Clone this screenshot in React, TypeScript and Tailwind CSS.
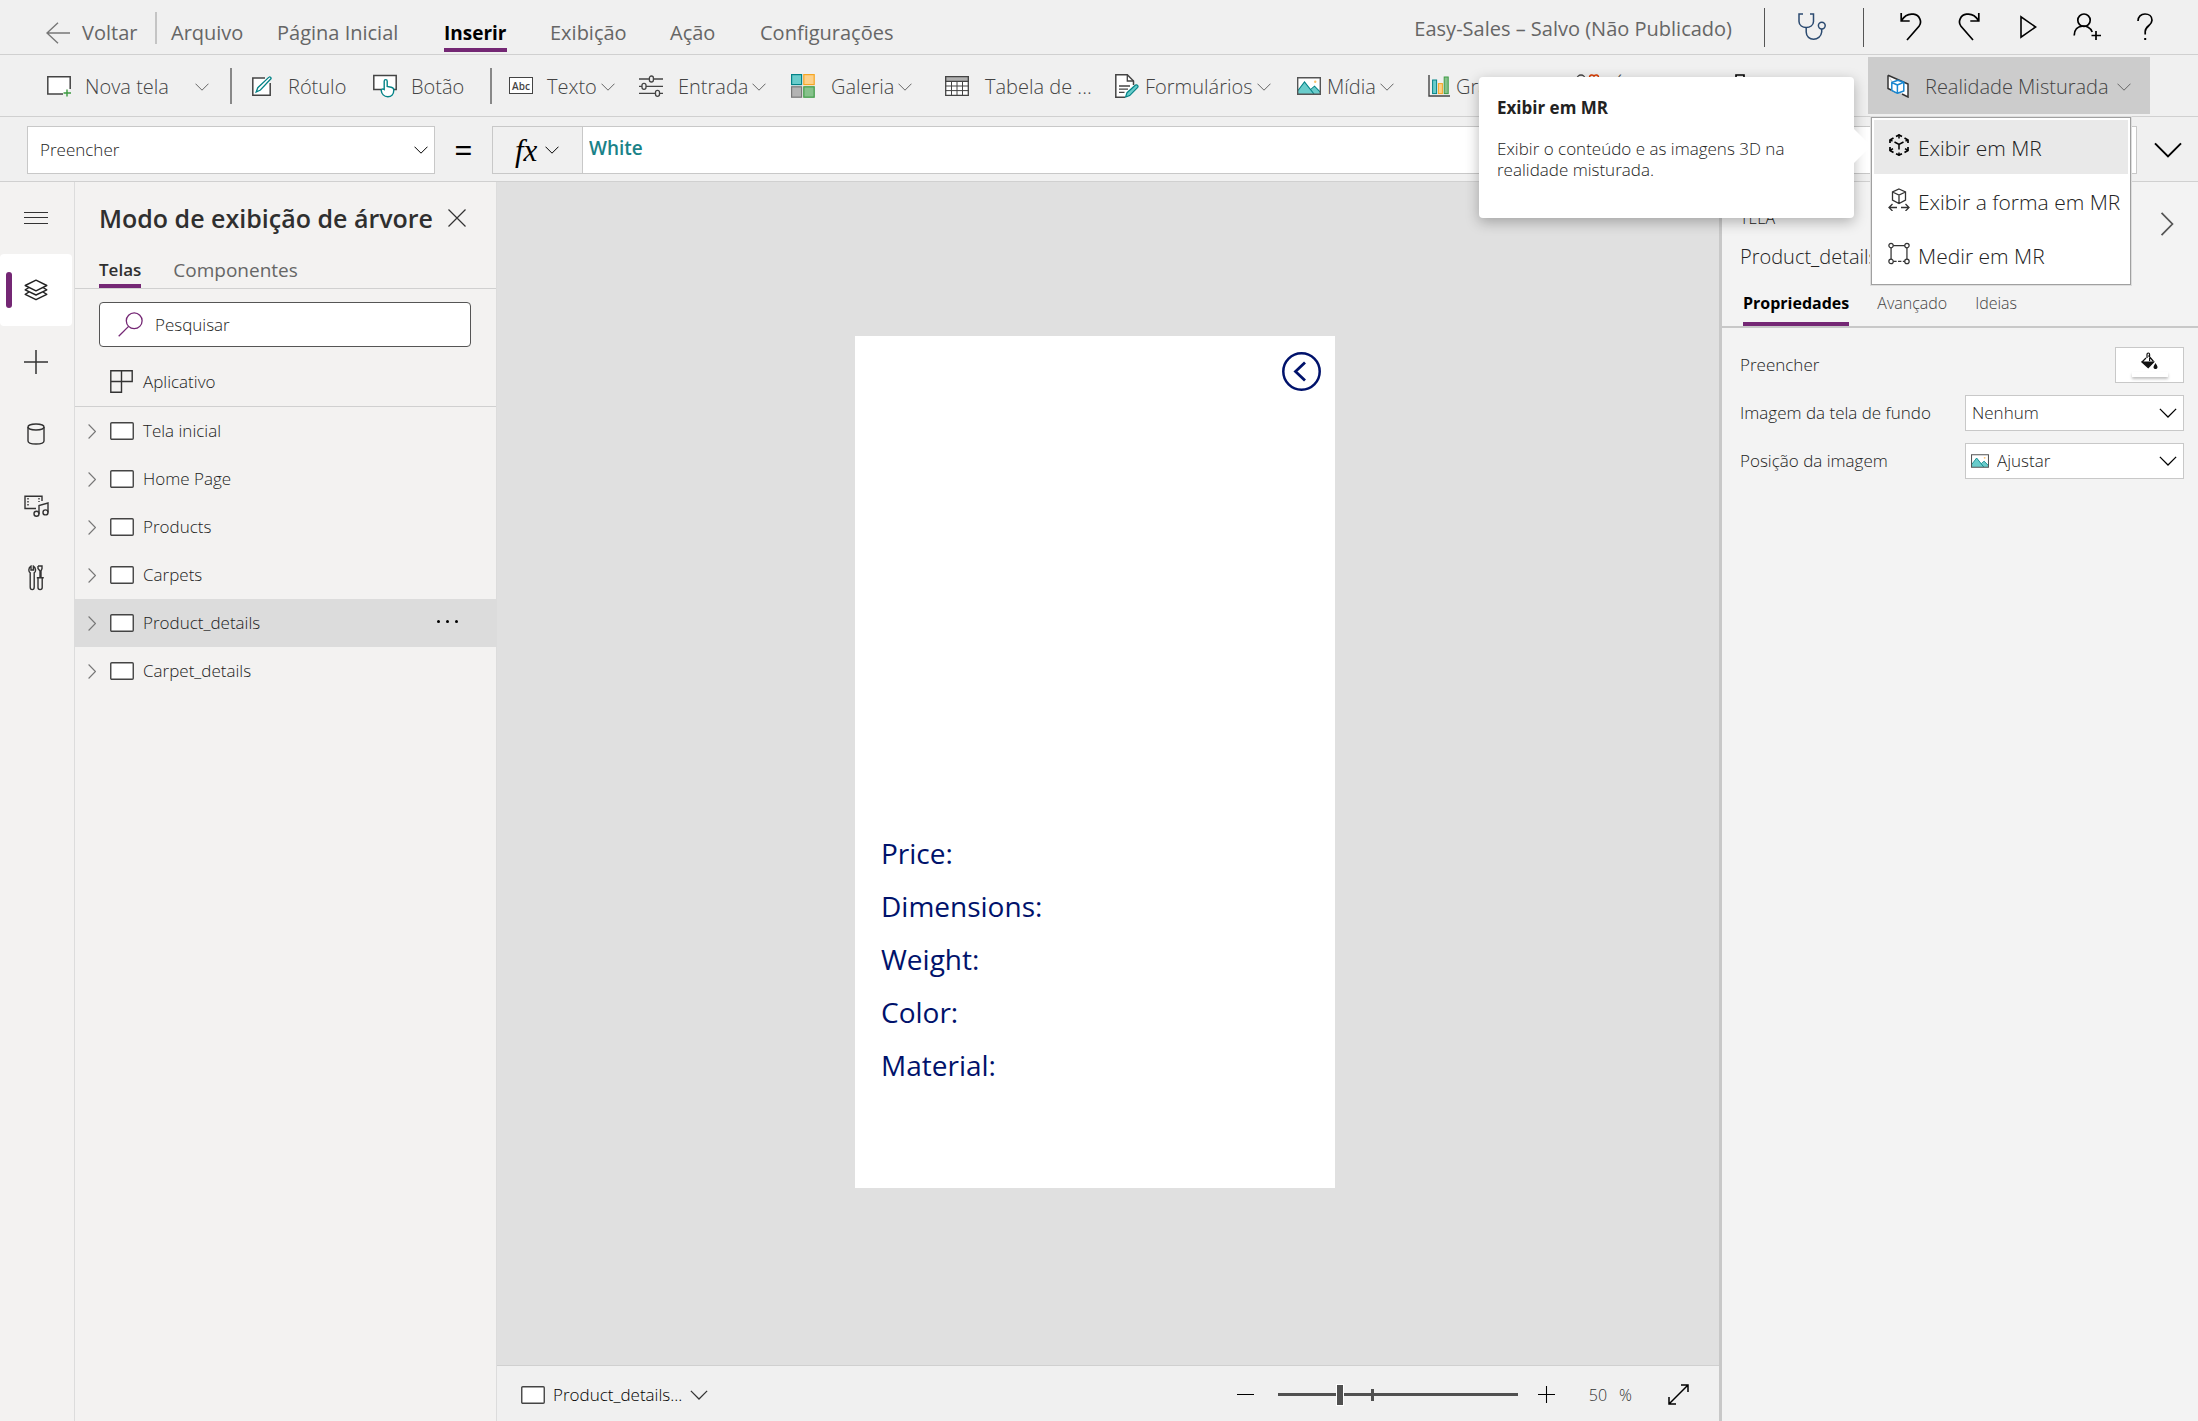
import type { ReactNode } from 'react';

type IconProps = { className?: string };

const ChevronDown = ({ className = 'w-[14px] h-2 text-[#666]' }: IconProps) => (
  <svg viewBox="0 0 14 8" className={`shrink-0 ${className}`} fill="none" stroke="currentColor" strokeWidth="1">
    <path d="M.5 .7 7 7.2 13.5 .7" />
  </svg>
);

const ChevronRight = ({ className = 'w-2 h-[15px] text-[#777]' }: IconProps) => (
  <svg viewBox="0 0 8 15" className={`shrink-0 ${className}`} fill="none" stroke="currentColor" strokeWidth="1.1">
    <path d="M.6 .5 7.4 7.5 .6 14.5" />
  </svg>
);

const BackArrow = () => (
  <svg viewBox="0 0 24 22" className="w-6 h-[22px] text-[#777]" fill="none" stroke="currentColor" strokeWidth="1.4">
    <path d="M24 11H1M12 .8 1 11l11 10.2" />
  </svg>
);

const ScreenIcon = () => (
  <svg viewBox="0 0 24 18" className="w-6 h-[18px] shrink-0">
    <rect x=".75" y=".75" width="22.5" height="16.5" rx="1" fill="#fff" stroke="#444" strokeWidth="1.4" />
  </svg>
);

const NewScreenIcon = () => (
  <svg viewBox="0 0 24 22" className="w-6 h-[22px]" fill="none">
    <path d="M16 19H.8V1.8h22.4V14" fill="#fff" stroke="#444" strokeWidth="1.5" />
    <path d="M20 14.5v7M16.5 18H24" stroke="#3c9a41" strokeWidth="1.4" />
  </svg>
);

const LabelIcon = () => (
  <svg viewBox="0 0 20 20" className="w-5 h-5" fill="none">
    <path d="M13 2H.8v17.2h17.4V7" fill="#fff" stroke="#444" strokeWidth="1.5" />
    <path d="M17 1.1c.8-.8 2.6.6 1.9 1.7L8.4 14l-4.2 2 1.6-4.3Z" fill="#fff" stroke="#038387" strokeWidth="1.3" />
  </svg>
);

const ButtonIcon = () => (
  <svg viewBox="0 0 24 24" className="w-6 h-6" fill="none">
    <path d="M9 15.500H.8V1.500h22.400v14H20" fill="#fff" stroke="#444" strokeWidth="1.5" />
    <path
      d="M11.2 15.500V7.200c0-2.100 3-2.100 3 0v5.200l4 .9c1.600.4 2.600 1.300 2.600 2.800 0 4-2.400 6.700-6 6.700-3.800 0-6.200-3-6.600-6.400 0-1.400 1.800-1.700 3-.9Z"
      fill="#fff"
      stroke="#038387"
      strokeWidth="1.4"
    />
  </svg>
);

const TextIcon = () => (
  <span className="flex h-[17px] w-6 items-center justify-center border border-[#444] bg-white text-[10px] leading-none font-semibold text-[#444]">
    Abc
  </span>
);

const InputIcon = () => (
  <svg viewBox="0 0 26 22" className="w-[26px] h-[22px]" fill="none" stroke="#444" strokeWidth="1.3">
    <path d="M1 4h10M16 4h9M1 11.3h3M8 11.3h17M1 18.3h16M22 18.3h3" />
    <rect x="11.4" y="1" width="4" height="6" rx="2" />
    <rect x="4" y="8.3" width="4" height="6" rx="2" />
    <rect x="17.5" y="15.3" width="4" height="6" rx="2" />
  </svg>
);

const GalleryIcon = () => (
  <svg viewBox="0 0 24 24" className="w-6 h-6" strokeWidth="1.2">
    <rect x=".6" y=".6" width="10" height="10" fill="#69cccb" stroke="#038387" />
    <rect x="12.8" y=".6" width="10.4" height="10" fill="#fdd18a" stroke="#f5a623" />
    <rect x=".6" y="12.8" width="10" height="10.4" fill="#b3b3b3" stroke="#777" />
    <rect x="12.8" y="12.8" width="10.4" height="10.4" fill="#86c28b" stroke="#3f9c46" />
  </svg>
);

const TableIcon = () => (
  <svg viewBox="0 0 24 20" className="w-6 h-5" fill="none" stroke="#444" strokeWidth="1.3">
    <path d="M.7.7h22.6v18.6H.7Z" fill="#fff" />
    <path d="M.7.7h22.6v4.6H.7Z" fill="#b0b0b0" />
    <path d="M.7 10h22.6M.7 14.6h22.6M6.5 5.3v14M12 5.3v14M17.5 5.3v14" strokeWidth="1" />
  </svg>
);

const FormIcon = () => (
  <svg viewBox="0 0 24 24" className="w-6 h-6" fill="none">
    <path d="M10 23.2H.8V.8h11.5l6.2 6.2v4" fill="#fff" stroke="#444" strokeWidth="1.5" />
    <path d="M12.3.8V7h6.2M4 12h11M4 15.2h9M4 18.4h5.5" stroke="#444" strokeWidth="1.3" />
    <path d="m10.6 23 1.4-4.3 8.5-7.6c1.6-.9 3.2.8 2.2 2.2l-8 8.3Z" fill="#69cccb" stroke="#038387" strokeWidth="1.2" />
  </svg>
);

const MediaIcon = ({ className = 'w-6 h-[18px]' }: IconProps) => (
  <svg viewBox="0 0 24 18" className={`shrink-0 ${className}`} fill="none">
    <path d="M.7.7h22.6v16.6H.7Z" fill="#fff" />
    <path d="M1 13.5 7.5 5l6.8 8 3.2-3.6L23 15v2.3H1Z" fill="#69cccb" />
    <path d="M1 13.5 7.5 5 17 17M13.6 12.6l3.9-3.4 5.8 6" stroke="#038387" strokeWidth="1.1" />
    <circle cx="18.2" cy="4.8" r="1.2" fill="#fdc068" />
    <path d="M.7.7h22.6v16.6H.7Z" stroke="#555" strokeWidth="1.4" />
  </svg>
);

const ChartIcon = () => (
  <svg viewBox="0 0 22 22" className="w-[22px] h-[22px]" fill="none">
    <rect x="4.6" y="5" width="4" height="13.6" fill="#69cccb" stroke="#038387" />
    <rect x="10.4" y="8.6" width="4" height="10" fill="#fdd18a" stroke="#f5a623" />
    <rect x="16.2" y="2" width="4" height="16.6" fill="#86c28b" stroke="#3f9c46" />
    <path d="M1 0v21h21" stroke="#444" strokeWidth="1.4" />
  </svg>
);

const ShapesIcon = () => (
  <svg viewBox="0 0 24 24" className="w-6 h-6" fill="none" strokeWidth="1.4">
    <circle cx="5" cy="5" r="4" stroke="#444" />
    <path d="M13.5 3.4c0-3 4-3 4.5-.8.5-2.2 4.5-2.2 4.5.8 0 2.6-4.5 5-4.5 5s-4.5-2.4-4.5-5Z" stroke="#d83b01" />
    <path d="M1 13h8v8H1ZM18 13l4 8h-8Z" stroke="#444" />
  </svg>
);

const CustomIcon = () => (
  <svg viewBox="0 0 10 24" className="w-[10px] h-6" fill="none" stroke="#000" strokeWidth="1.6">
    <path d="M1 23V1h8v22Z" />
  </svg>
);

const MixedRealityIcon = () => (
  <svg viewBox="0 0 22 24" className="w-[22px] h-6" fill="none">
    <path d="M1 1.2 21 10v13L15 20M9.5 18.5 1 14.5V1.2" fill="#fff" stroke="#333" strokeWidth="1.5" />
    <path d="m10 7.5 6.5 1.5v8.5L10 19.5 4 16.5V8.500Z" fill="#fff" />
    <path d="M10.4 11v8.3l-5.600-3V8.500l6-2.200 6 2V17l-6.400 2.300M4.800 8.500l5.600 2.500 6.400-2.700" stroke="#1b87d0" strokeWidth="1.5" strokeLinejoin="round" />
  </svg>
);

const HealthIcon = () => (
  <svg viewBox="0 0 28 28" className="w-7 h-7" fill="none" stroke="#2b4a70" strokeWidth="1.5">
    <path d="M5 1H1v7.500c0 8 14.500 8 14.500 0V1H12" />
    <path d="M8.200 14.500v4.500c0 9.500 14.500 9.500 15.500 0v-3" />
    <circle cx="23.800" cy="12.600" r="3.400" />
  </svg>
);

const UndoIcon = () => (
  <svg viewBox="0 0 22 28" className="w-[22px] h-7" fill="none" stroke="#000" strokeWidth="1.7">
    <path d="M1.200 0v8h8.500M1.500 7.500C4.500 2.500 9 .5 13.500 1.200c6 .8 9 7.500 5.500 12L7 27" />
  </svg>
);

const RedoIcon = () => (
  <svg viewBox="0 0 22 28" className="w-[22px] h-7" fill="none" stroke="#000" strokeWidth="1.7">
    <path d="M20.800 0v8h-8.500M20.500 7.500C17.500 2.500 13 .5 8.500 1.200 2.500 2-.5 8.700 3 13.200L15 27" />
  </svg>
);

const PlayIcon = () => (
  <svg viewBox="0 0 17 24" className="w-[17px] h-6" fill="none" stroke="#000" strokeWidth="1.6">
    <path d="M1 1.800v20.400L15.600 12Z" />
  </svg>
);

const ShareIcon = () => (
  <svg viewBox="0 0 28 28" className="w-7 h-7" fill="none" stroke="#000" strokeWidth="1.7">
    <circle cx="11" cy="7.200" r="6.200" />
    <path d="M1.200 22.500c0-12 15-12 18-3.500M23 18v9M18.500 22.500H28" />
  </svg>
);

const HelpIcon = () => (
  <svg viewBox="0 0 16 28" className="w-4 h-7" fill="none" stroke="#000" strokeWidth="1.7">
    <path d="M1 8C1 3.500 4 1 8 1s7 2.500 7 6.200c0 5.300-6.800 5.800-6.800 11.300v3" />
    <path d="M8.200 25v2" strokeWidth="2" />
  </svg>
);

const MenuIcon = () => (
  <svg viewBox="0 0 24 12" className="w-6 h-3" stroke="#333" strokeWidth="1.1">
    <path d="M0 .5h24M0 5.500h24M0 11.500h24" />
  </svg>
);

const LayersIcon = () => (
  <svg viewBox="0 0 24 22" className="w-6 h-[22px]" fill="none" stroke="#222" strokeWidth="1.4" strokeLinejoin="round">
    <path d="M12 1.200 22.800 6.500 12 11.800 1.200 6.500Z" />
    <path d="m5 8.500-3.800 2.300L12 16l10.800-5.200L19 8.500" />
    <path d="m5 13-3.800 2.300L12 20.700l10.800-5.400L19 13" />
  </svg>
);

const PlusIcon = ({ className = 'w-6 h-6 text-[#333]' }: IconProps) => (
  <svg viewBox="0 0 24 24" className={className} stroke="currentColor" strokeWidth="1.5">
    <path d="M12 0v24M0 12h24" />
  </svg>
);

const DataIcon = () => (
  <svg viewBox="0 0 18 22" className="w-[18px] h-[22px]" fill="none" stroke="#333" strokeWidth="1.4">
    <ellipse cx="9" cy="4" rx="8" ry="3" />
    <path d="M1 4v14c0 4 16 4 16 0V4" />
  </svg>
);

const MusicIcon = () => (
  <svg viewBox="0 0 25 22" className="w-[25px] h-[22px]" fill="none" stroke="#333" strokeWidth="1.4">
    <path d="M12 13.500H1V1.200h17V6" />
    <path d="M4 3v9M15 3v4" strokeDasharray="1.5 1.5" />
    <path d="M15 19V10.500L24 8v9.500" />
    <circle cx="12.500" cy="18.800" r="2.500" />
    <circle cx="21.500" cy="17.400" r="2.500" />
  </svg>
);

const ToolsIcon = () => (
  <svg viewBox="0 0 16 26" className="w-4 h-[26px]" fill="none" stroke="#333" strokeWidth="1.4">
    <path d="M3 1.200C0 3 .5 7 2.200 7.800V22c0 3.500 4 3.500 4 0V7.800C8 7 8.200 3 5.400 1.200V5H3Z" />
    <path d="M10 1h4v2.500L13 6v6.500M12 12.500V6l-2-2.500V1M8.800 12.800h7M10 13v9.500c0 2.800 4.200 2.800 4.200 0V13" />
  </svg>
);

const CloseIcon = () => (
  <svg viewBox="0 0 18 18" className="w-[18px] h-[18px]" stroke="#333" strokeWidth="1.2">
    <path d="m.5.5 17 17M17.500.5l-17 17" />
  </svg>
);

const SearchIcon = () => (
  <svg viewBox="0 0 25 25" className="w-[25px] h-[25px] shrink-0" fill="none" stroke="#742774" strokeWidth="1.3">
    <circle cx="16.200" cy="8.800" r="7.900" />
    <path d="M10.600 14.400.7 24.300" />
  </svg>
);

const AppIcon = () => (
  <svg viewBox="0 0 23 23" className="w-[23px] h-[23px]" fill="none" stroke="#333" strokeWidth="1.4">
    <path d="M.8.8h21.400v10.700H.8ZM.8 11.500h10.700v10.700H.8ZM11.500.8v10.700" />
  </svg>
);

const ViewInMrIcon = () => (
  <svg viewBox="0 0 20 22" className="w-5 h-[22px]" fill="none" stroke="#000" strokeWidth="1.7">
    <path d="M7 2.500 10 1l3 1.500M15.500 4 19 6v3M19 13v3.500l-3.500 2M13 19.700 10 21l-3-1.300M4.500 18.500 1 16.500V13M1 9V6l3.500-2" />
    <path d="m5.500 8 4.500 2.500L14.500 8M10 10.500v5M10 .5v4M1 16.500l3-1.800M19 16.500l-3-1.800M10 21.500v-3M1 5.800l2.500 1.400M19 5.800l-2.500 1.400" strokeWidth="1.5" />
  </svg>
);

const ViewShapeIcon = () => (
  <svg viewBox="0 0 22 23" className="w-[22px] h-[23px]" fill="none" stroke="#333" strokeWidth="1.3">
    <path d="m11 1 6.500 3v8L11 15.500 4.500 12V4ZM4.500 4 11 7l6.500-3M11 7v8.500" />
    <path d="M9 19.500H1M13 19.500h8M4.500 16 1 19.500 4.500 23M17.500 16l3.500 3.500-3.500 3.500" />
  </svg>
);

const MeasureIcon = () => (
  <svg viewBox="0 0 23 23" className="w-[22px] h-[23px]" fill="none" stroke="#333" strokeWidth="1.3">
    <path d="M5.500 3.200h12M3.200 5.500v12M19.800 5.500v12" />
    <path d="M5.500 19.800h12" strokeDasharray="3.5 1.5" />
    <circle cx="3.200" cy="3.200" r="2.300" />
    <circle cx="19.800" cy="3.200" r="2.300" />
    <circle cx="3.200" cy="19.800" r="2.300" />
    <circle cx="19.800" cy="19.800" r="2.300" />
  </svg>
);

const FillIcon = () => (
  <svg viewBox="0 0 17 18" className="w-[17px] h-[18px]" fill="none" stroke="#111" strokeWidth="1.2">
    <path d="M6 6V2.500c0-2 2.600-2 2.600 0V9M7.500 3.500l5 6" />
    <path d="M1 10h11.600l-5.400 5.600Z M5 6 1 10" fill="#111" />
    <path d="M14.500 11c1 1.800 2 2.800 2 4.200 0 2.400-4 2.400-4 0 0-1.400 1-2.400 2-4.200Z" fill="#111" stroke="none" />
  </svg>
);

const ExpandIcon = () => (
  <svg viewBox="0 0 21 21" className="w-[21px] h-[21px]" fill="none" stroke="#000" strokeWidth="1.5">
    <path d="M1.500 19.500 19.500 1.500M13 1h7v7M1 13v7h7" />
  </svg>
);

const CircleBackIcon = () => (
  <svg viewBox="0 0 39 39" className="w-[39px] h-[39px]" fill="none" stroke="#00126b" strokeWidth="2.5">
    <circle cx="19.500" cy="19.500" r="18.200" />
    <path d="m23 10.500-9.500 9 9.500 9" strokeWidth="2.8" />
  </svg>
);

const navItems = [
  { label: 'Arquivo', className: 'w-[106px]' },
  { label: 'Página Inicial', className: 'w-[167px]' },
  { label: 'Inserir', className: 'w-[106px]', active: true },
  { label: 'Exibição', className: 'w-[120px]' },
  { label: 'Ação', className: 'w-[90px]' },
  { label: 'Configurações', className: 'w-[140px]' },
];

type Tool = { label: string; icon: ReactNode; className: string; chevron?: boolean };

const basicTools: Tool[] = [
  { label: 'Rótulo', icon: <LabelIcon />, className: 'w-[121px] gap-4' },
  { label: 'Botão', icon: <ButtonIcon />, className: 'w-[117px] gap-3.5' },
];

const insertTools: Tool[] = [
  { label: 'Texto', icon: <TextIcon />, className: 'w-[129px] gap-3.5', chevron: true },
  { label: 'Entrada', icon: <InputIcon />, className: 'w-[153px] gap-3.5', chevron: true },
  { label: 'Galeria', icon: <GalleryIcon />, className: 'w-[154px] gap-4', chevron: true },
  { label: 'Tabela de ...', icon: <TableIcon />, className: 'w-[170px] gap-4' },
  { label: 'Formulários', icon: <FormIcon />, className: 'w-[182px] gap-1.5', chevron: true },
  { label: 'Mídia', icon: <MediaIcon />, className: 'w-[131px] gap-1.5', chevron: true },
  { label: 'Gráficos', icon: <ChartIcon />, className: 'w-[148px] gap-1.5', chevron: true },
  { label: 'Ícones', icon: <ShapesIcon />, className: 'w-[159px] gap-4', chevron: true },
  { label: 'Controle', icon: <CustomIcon />, className: 'w-[133px] gap-4' },
];

const screens = ['Tela inicial', 'Home Page', 'Products', 'Carpets', 'Product_details', 'Carpet_details'];

const railItems = [
  { label: 'Menu', icon: <MenuIcon /> },
  { label: 'Modo de exibição de árvore', icon: <LayersIcon />, active: true },
  { label: 'Inserir', icon: <PlusIcon /> },
  { label: 'Dados', icon: <DataIcon /> },
  { label: 'Mídia', icon: <MusicIcon /> },
  { label: 'Ferramentas avançadas', icon: <ToolsIcon /> },
];

const mrItems = [
  { label: 'Exibir em MR', icon: <ViewInMrIcon />, active: true },
  { label: 'Exibir a forma em MR', icon: <ViewShapeIcon /> },
  { label: 'Medir em MR', icon: <MeasureIcon /> },
];

const fields = ['Price:', 'Dimensions:', 'Weight:', 'Color:', 'Material:'];

const Separator = ({ className = '' }: IconProps) => <span className={`w-0.5 shrink-0 bg-[#888] ${className}`} />;

const ToolButton = ({ label, icon, className, chevron }: Tool) => (
  <button className={`flex h-full shrink-0 items-center whitespace-nowrap ${className}`}>
    {icon}
    <span className="flex items-center gap-1 pt-0.5">
      {label}
      {chevron && <ChevronDown />}
    </span>
  </button>
);

const TopBar = () => (
  <header className="flex h-[55px] items-center justify-between border-b border-[#d0d0d0] text-[20px] text-[#666]">
    <nav className="flex h-full items-end pl-[46px]">
      <button className="flex h-[42px] w-[109px] items-center gap-3">
        <BackArrow />
        Voltar
      </button>
      <span className="mr-3.5 mb-[10px] h-8 w-0.5 bg-[#c4c4c4]" />
      {navItems.map((item) => (
        <div key={item.label} className={`flex h-[42px] ${item.className}`}>
          <button
            className={
              item.active
                ? 'mb-0.5 border-b-4 border-[#742774] pt-1.5 text-[19px] font-bold text-black'
                : 'mb-0.5 border-b-4 border-transparent pt-1.5'
            }
          >
            {item.label}
          </button>
        </div>
      ))}
    </nav>
    <div className="flex items-center pr-[45px]">
      <span className="pt-1">Easy-Sales – Salvo (Não Publicado)</span>
      <span className="mr-[33px] ml-8 h-[39px] w-px bg-[#555]" />
      <button aria-label="Verificador"><HealthIcon /></button>
      <span className="mr-9 ml-[37px] h-[39px] w-px bg-[#555]" />
      <div className="flex items-center gap-9">
        <button aria-label="Desfazer"><UndoIcon /></button>
        <button aria-label="Refazer"><RedoIcon /></button>
        <button aria-label="Visualizar" className="pl-1"><PlayIcon /></button>
        <button aria-label="Compartilhar"><ShareIcon /></button>
        <button aria-label="Ajuda"><HelpIcon /></button>
      </div>
    </div>
  </header>
);

const MixedReality = () => (
  <div className="relative h-[57px] w-[282px] shrink-0">
    <button className="flex h-full w-full items-center gap-4 bg-[#ccc] pl-[19px]">
      <MixedRealityIcon />
      <span className="flex items-center gap-2 pt-0.5 whitespace-nowrap">
        Realidade Misturada
        <ChevronDown />
      </span>
    </button>
    <div
      role="tooltip"
      className="absolute top-5 right-full z-20 mr-[14px] h-[141px] w-[375px] rounded-sm bg-white px-[18px] py-5 text-[17px] leading-[21px] text-[#222] shadow-[0_4px_14px_rgba(0,0,0,0.28)]"
    >
      <span className="absolute top-[57px] -right-3 size-6 rotate-45 bg-white" />
      <p className="font-bold">Exibir em MR</p>
      <p className="pt-5">Exibir o conteúdo e as imagens 3D na realidade misturada.</p>
    </div>
    <div
      role="menu"
      className="absolute top-[60px] left-[3px] z-30 w-[260px] border border-[#a0a0a0] bg-white p-0.5 text-[21px] text-[#222] ring-1 ring-[#ddd]"
    >
      {mrItems.map((item) => (
        <button
          key={item.label}
          role="menuitem"
          className={`flex h-[54px] w-full items-center gap-2 pl-3.5 whitespace-nowrap ${item.active ? 'bg-[#e9e9e9]' : ''}`}
        >
          <span className="flex w-[22px] justify-center pb-1">{item.icon}</span>
          <span className="pt-1">{item.label}</span>
        </button>
      ))}
    </div>
  </div>
);

const Toolbar = () => (
  <div className="flex h-[62px] items-center border-b border-[#d0d0d0] pl-[47px] text-[20px] font-light text-[#444]">
    <ToolButton label="Nova tela" icon={<NewScreenIcon />} className="w-[148px] gap-3.5" />
    <button aria-label="Mais telas" className="flex w-[35px] pt-0.5"><ChevronDown /></button>
    <Separator className="mr-5 h-9" />
    {basicTools.map((tool) => <ToolButton key={tool.label} {...tool} />)}
    <Separator className="mr-[17px] h-9" />
    {insertTools.map((tool) => <ToolButton key={tool.label} {...tool} />)}
    <MixedReality />
  </div>
);

const FormulaBar = () => (
  <div className="flex h-[65px] items-center border-b border-[#d0d0d0] pt-0.5 pl-[27px] text-[17px]">
    <div className="flex h-12 w-[408px] items-center border border-[#c8c8c8] bg-white pr-1.5 pl-3">
      <select aria-label="Propriedade" className="h-full flex-1 appearance-none font-light text-[#222] outline-none">
        <option>Preencher</option>
      </select>
      <ChevronDown className="pointer-events-none w-[14px] h-2 text-black" />
    </div>
    <span className="flex w-[57px] justify-center text-[32px] leading-none text-black">=</span>
    <button className="flex h-12 w-[91px] items-center gap-2 border border-[#c8c8c8] pl-[22px]">
      <span className="font-['Liberation_Serif'] text-[31px] leading-none text-black italic">fx</span>
      <ChevronDown className="w-[14px] h-2 text-black" />
    </button>
    <input
      aria-label="Fórmula"
      defaultValue="White"
      className="h-12 min-w-0 flex-1 border border-l-0 border-[#c8c8c8] bg-white px-1.5 pb-1 text-[19px] font-semibold text-[#1a8288] outline-none"
    />
    <button aria-label="Expandir" className="flex w-[61px] justify-center">
      <ChevronDown className="w-7 h-4 text-black" />
    </button>
  </div>
);

const Rail = () => (
  <aside className="flex w-[75px] shrink-0 flex-col border-r border-[#dcdcdc]">
    {railItems.map((item) => (
      <button
        key={item.label}
        aria-label={item.label}
        className={`relative flex h-[72px] w-[72px] items-center justify-center rounded-sm ${item.active ? 'bg-white' : ''}`}
      >
        {item.active && <span className="absolute left-1.5 h-9 w-1.5 rounded-full bg-[#742774]" />}
        {item.icon}
      </button>
    ))}
  </aside>
);

const TreeView = () => (
  <section className="flex w-[422px] shrink-0 flex-col border-r border-[#dcdcdc] text-[17px] text-[#222]">
    <div className="flex items-center justify-between pt-[18px] pr-[30px] pl-6">
      <h2 className="text-[25px] leading-9 font-semibold whitespace-nowrap text-[#2f2f2f]">Modo de exibição de árvore</h2>
      <button aria-label="Fechar"><CloseIcon /></button>
    </div>
    <div className="mt-4 flex gap-8 border-b border-[#d0d0d0] pl-6">
      <button className="h-9 border-b-4 border-[#742774] pt-1 font-semibold text-[#2f2f2f]">Telas</button>
      <button className="h-9 border-b-4 border-transparent pt-1 text-[19px] text-[#666]">Componentes</button>
    </div>
    <label className="mt-[13px] mr-[25px] ml-6 flex h-[45px] items-center gap-3 rounded-sm border border-[#555] bg-white pl-[18px]">
      <SearchIcon />
      <input
        type="search"
        placeholder="Pesquisar"
        className="min-w-0 flex-1 font-light outline-none placeholder:text-[#222]"
      />
    </label>
    <button className="mt-2.5 flex h-[50px] items-center gap-[10px] border-b border-[#d0d0d0] pl-[35px] font-light">
      <AppIcon />
      Aplicativo
    </button>
    <ul className="font-light">
      {screens.map((name) => (
        <li
          key={name}
          className={`flex h-12 items-center justify-between pr-[38px] pl-[13px] ${name === 'Product_details' ? 'bg-[#dcdcdc]' : ''}`}
        >
          <button className="flex items-center gap-[9px]">
            <ChevronRight />
            <span className="ml-[5px]"><ScreenIcon /></span>
            {name}
          </button>
          {name === 'Product_details' && (
            <button aria-label="Mais opções" className="flex gap-1.5 pb-1">
              <i className="size-[3px] rounded-full bg-black" />
              <i className="size-[3px] rounded-full bg-black" />
              <i className="size-[3px] rounded-full bg-black" />
            </button>
          )}
        </li>
      ))}
    </ul>
  </section>
);

const Canvas = () => (
  <main className="flex min-w-0 flex-1 flex-col">
    <div className="flex flex-1 items-center justify-center bg-[#e0e0e0] pr-[26px] pb-6">
      <div className="flex h-[852px] w-[480px] flex-col justify-between bg-white pt-4 pb-24 pl-[26px]">
        <button aria-label="Voltar" className="mr-[14px] self-end"><CircleBackIcon /></button>
        <div className="text-[28px] leading-[53px] text-[#00126b]">
          {fields.map((field) => <p key={field}>{field}</p>)}
        </div>
      </div>
    </div>
    <footer className="flex h-14 items-center border-t border-[#d0d0d0] bg-[#f0f0f0] pt-0.5 pr-[30px] pl-6">
      <button className="flex items-center gap-2 text-[17px] font-light text-black">
        <ScreenIcon />
        Product_details...
        <ChevronDown className="w-[18px] h-[10px] text-[#333]" />
      </button>
      <div className="ml-auto flex items-center text-[16px] font-light text-[#333]">
        <button aria-label="Reduzir" className="mr-6 flex h-6 items-center">
          <span className="h-px w-[17px] bg-black" />
        </button>
        <div className="relative flex h-6 w-[240px] items-center">
          <span className="absolute left-[93px] h-3 w-[3px] bg-[#505050]" />
          <input
            type="range"
            aria-label="Zoom"
            min="0"
            max="200"
            defaultValue="50"
            className="relative h-[3px] w-full appearance-none bg-[#505050] [&::-webkit-slider-thumb]:h-[22px] [&::-webkit-slider-thumb]:w-2 [&::-webkit-slider-thumb]:appearance-none [&::-webkit-slider-thumb]:border [&::-webkit-slider-thumb]:border-white [&::-webkit-slider-thumb]:bg-[#505050]"
          />
        </div>
        <button aria-label="Ampliar" className="mr-[34px] ml-5"><PlusIcon className="size-[17px] text-black" /></button>
        <span className="mr-3">50</span>
        <span className="mr-9">%</span>
        <button aria-label="Ajustar à janela"><ExpandIcon /></button>
      </div>
    </footer>
  </main>
);

const PropertiesPanel = () => (
  <aside className="w-[479px] shrink-0 border-l-[3px] border-[#c8c8c8] bg-[#f3f3f3] text-[17px] font-light text-[#222]">
    <div className="flex items-start justify-between pt-6 pr-6 pl-[18px]">
      <div>
        <p className="text-[16px] leading-6">TELA</p>
        <p className="pt-3 text-[20px] leading-[30px]">Product_details</p>
      </div>
      <button aria-label="Recolher" className="pt-1.5"><ChevronRight className="w-[14px] h-6 text-[#555]" /></button>
    </div>
    <div className="mt-3 flex gap-7 border-b-2 border-[#c8c8c8] pl-[21px] text-[16px] text-[#444]">
      <button className="h-[42px] border-b-4 border-[#742774] font-bold text-black">Propriedades</button>
      <button className="h-[42px] border-b-4 border-transparent">Avançado</button>
      <button className="h-[42px] border-b-4 border-transparent">Ideias</button>
    </div>
    <div className="flex flex-col gap-3 pt-[19px] pr-[14px] pl-[18px]">
      <div className="flex h-9 items-center justify-between">
        <span>Preencher</span>
        <button aria-label="Cor de preenchimento" className="flex h-9 w-[69px] flex-col items-center gap-0.5 border border-[#c8c8c8] bg-white pt-1">
          <FillIcon />
          <span className="h-[5px] w-9 bg-white shadow-[0_2px_3px_rgba(0,0,0,0.25)]" />
        </button>
      </div>
      <div className="flex h-9 items-center justify-between">
        <label htmlFor="background">Imagem da tela de fundo</label>
        <div className="flex h-9 w-[219px] items-center border border-[#c8c8c8] bg-white pr-1.5 pl-1.5">
          <select id="background" className="h-full flex-1 appearance-none outline-none">
            <option>Nenhum</option>
          </select>
          <ChevronDown className="pointer-events-none w-[18px] h-[10px] text-black" />
        </div>
      </div>
      <div className="flex h-9 items-center justify-between">
        <label htmlFor="position">Posição da imagem</label>
        <div className="flex h-9 w-[219px] items-center gap-2 border border-[#c8c8c8] bg-white pr-1.5 pl-[5px]">
          <MediaIcon className="w-[18px] h-[14px]" />
          <select id="position" className="h-full flex-1 appearance-none outline-none">
            <option>Ajustar</option>
          </select>
          <ChevronDown className="pointer-events-none w-[18px] h-[10px] text-black" />
        </div>
      </div>
    </div>
  </aside>
);

export default function App() {
  return (
    <div className="flex min-h-screen flex-col bg-[#f0f0f0] font-['Open_Sans',sans-serif]">
      <TopBar />
      <Toolbar />
      <FormulaBar />
      <div className="flex flex-1 bg-[#f3f2f1]">
        <Rail />
        <TreeView />
        <Canvas />
        <PropertiesPanel />
      </div>
    </div>
  );
}
